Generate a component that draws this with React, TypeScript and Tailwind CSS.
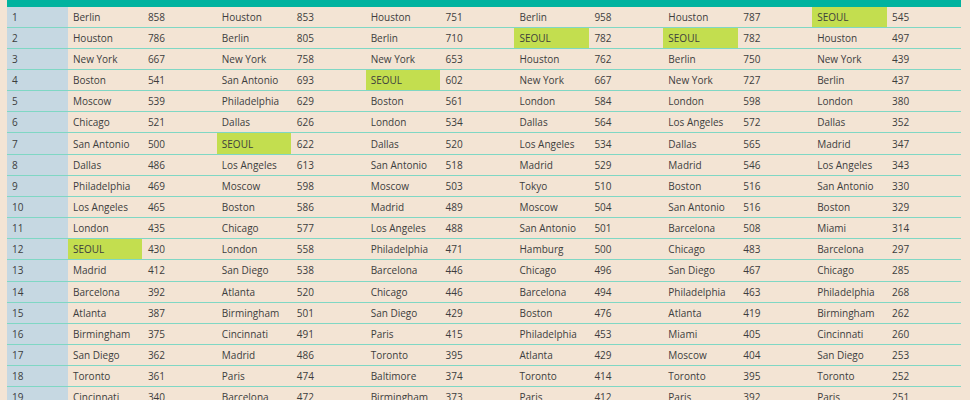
import React from "react";

type Cell = [string, number];

const groups: Cell[][] = [
  [["Berlin",858],["Houston",786],["New York",667],["Boston",541],["Moscow",539],["Chicago",521],["San Antonio",500],["Dallas",486],["Philadelphia",469],["Los Angeles",465],["London",435],["SEOUL",430],["Madrid",412],["Barcelona",392],["Atlanta",387],["Birmingham",375],["San Diego",362],["Toronto",361],["Cincinnati",340]],
  [["Houston",853],["Berlin",805],["New York",758],["San Antonio",693],["Philadelphia",629],["Dallas",626],["SEOUL",622],["Los Angeles",613],["Moscow",598],["Boston",586],["Chicago",577],["London",558],["San Diego",538],["Atlanta",520],["Birmingham",501],["Cincinnati",491],["Madrid",486],["Paris",474],["Barcelona",472]],
  [["Houston",751],["Berlin",710],["New York",653],["SEOUL",602],["Boston",561],["London",534],["Dallas",520],["San Antonio",518],["Moscow",503],["Madrid",489],["Los Angeles",488],["Philadelphia",471],["Barcelona",446],["Chicago",446],["San Diego",429],["Paris",415],["Toronto",395],["Baltimore",374],["Birmingham",373]],
  [["Berlin",958],["SEOUL",782],["Houston",762],["New York",667],["London",584],["Dallas",564],["Los Angeles",534],["Madrid",529],["Tokyo",510],["Moscow",504],["San Antonio",501],["Hamburg",500],["Chicago",496],["Barcelona",494],["Boston",476],["Philadelphia",453],["Atlanta",429],["Toronto",414],["Paris",412]],
  [["Houston",787],["SEOUL",782],["Berlin",750],["New York",727],["London",598],["Los Angeles",572],["Dallas",565],["Madrid",546],["Boston",516],["San Antonio",516],["Barcelona",508],["Chicago",483],["San Diego",467],["Philadelphia",463],["Atlanta",419],["Miami",405],["Moscow",404],["Toronto",395],["Paris",392]],
  [["SEOUL",545],["Houston",497],["New York",439],["Berlin",437],["London",380],["Dallas",352],["Madrid",347],["Los Angeles",343],["San Antonio",330],["Boston",329],["Miami",314],["Barcelona",297],["Chicago",285],["Philadelphia",268],["Birmingham",262],["Cincinnati",260],["San Diego",253],["Toronto",252],["Paris",251]],
];

export default function App() {
  const rows = groups[0].map((_, i) => i);
  return (
    <div
      className="w-[970px] h-[400px] overflow-hidden bg-[#f3e4d4] pl-[7px] pr-[9px] text-[#3d3d3d]"
      style={{ fontFamily: '"Open Sans", "Liberation Sans", sans-serif' }}
    >
      <div className="h-[6.5px] bg-[#00b39f]" />
      {rows.map((i) => (
        <div
          key={i}
          className="grid grid-cols-[61px_repeat(12,minmax(0,1fr))] h-[21.16px] border-b-[1.5px] border-[#7fd7c4] text-[10px] leading-none"
        >
          <div className="bg-[#c6d8e2] pl-[5px] flex items-center">{i + 1}</div>
          {groups.map((g, gi) => {
            const [city, val] = g[i];
            const hl = city === "SEOUL";
            return (
              <React.Fragment key={gi}>
                <div className={`pl-[5px] flex items-center whitespace-nowrap ${hl ? "bg-[#c3de4f]" : ""}`}>{city}</div>
                <div className="pl-[5.5px] flex items-center">{val}</div>
              </React.Fragment>
            );
          })}
        </div>
      ))}
    </div>
  );
}
